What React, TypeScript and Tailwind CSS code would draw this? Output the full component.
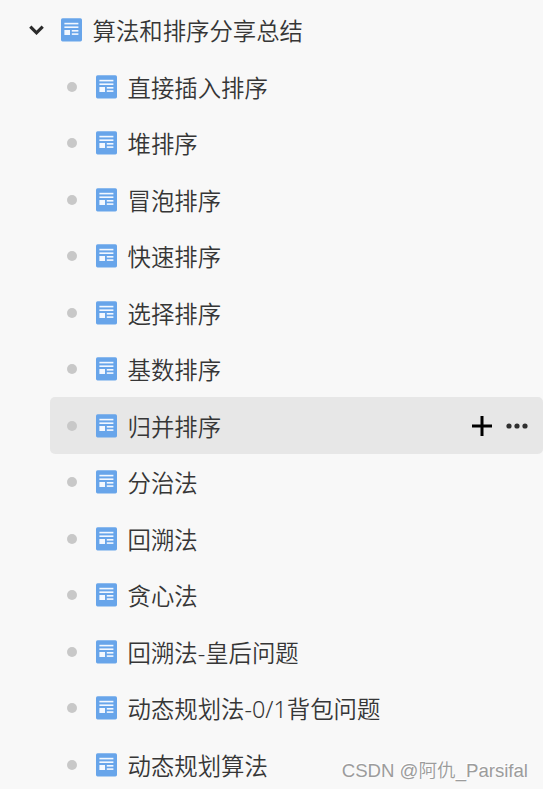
import React, { useState } from "react";

type DocNode = {
  id: number;
  title: string;
};

const children: DocNode[] = [
  { id: 1, title: "直接插入排序" },
  { id: 2, title: "堆排序" },
  { id: 3, title: "冒泡排序" },
  { id: 4, title: "快速排序" },
  { id: 5, title: "选择排序" },
  { id: 6, title: "基数排序" },
  { id: 7, title: "归并排序" },
  { id: 8, title: "分治法" },
  { id: 9, title: "回溯法" },
  { id: 10, title: "贪心法" },
  { id: 11, title: "回溯法-皇后问题" },
  { id: 12, title: "动态规划法-0/1背包问题" },
  { id: 13, title: "动态规划算法" },
];

function DocIcon() {
  return (
    <svg width="21" height="24" viewBox="0 0 21 24" className="shrink-0" aria-hidden="true">
      <rect x="0" y="0.2" width="21" height="23.2" rx="1.6" fill="#68a5ea" />
      <g fill="#f3f8ff">
        <rect x="3.4" y="4.8" width="14" height="1.6" />
        <rect x="3.4" y="8.4" width="14" height="1.6" />
        <rect x="3.4" y="12" width="5.6" height="5" />
        <rect x="10.8" y="12" width="6.6" height="1.6" />
        <rect x="10.8" y="15.3" width="6.6" height="1.6" />
      </g>
    </svg>
  );
}

export default function App() {
  const [open, setOpen] = useState(true);
  const [activeId, setActiveId] = useState(7);

  return (
    <div className="relative h-[789px] w-[543px] overflow-hidden bg-[#f8f8f8] pt-[1.9px] font-['Noto_Sans','Noto_Sans_CJK_SC',sans-serif] text-[23.4px] font-[350] leading-none text-[#363636]">
      <div className="flex h-[56.5px] items-center pl-[29px]">
        <button type="button" onClick={() => setOpen(!open)} aria-label="toggle">
          <svg width="15" height="10" viewBox="0 0 15 10" className={open ? "" : "-rotate-90"}>
            <path d="M1.3 1.7 7.5 7.8 13.7 1.7" fill="none" stroke="#2b2b2b" strokeWidth="3.2" />
          </svg>
        </button>
        <div className="ml-[17px] flex items-center">
          <DocIcon />
          <span className="ml-[10.5px] whitespace-nowrap pt-[3px]">算法和排序分享总结</span>
        </div>
      </div>

      {open ? (
        <ul className="pl-[50px]">
          {children.map((node) => (
            <li
              key={node.id}
              onClick={() => setActiveId(node.id)}
              className={`flex h-[56.5px] items-center rounded-[5px] pl-[17px] pr-[15px] ${
                node.id === activeId ? "bg-[#e7e7e7]" : ""
              }`}
            >
              <span className="size-[10px] shrink-0 rounded-full bg-[#c8c8c8]" />
              <span className="ml-[19px] flex">
                <DocIcon />
              </span>
              <span className="ml-[10.5px] whitespace-nowrap pt-[3.7px]">{node.title}</span>
              {node.id === activeId ? (
                <div className="ml-auto flex items-center gap-[14px]">
                  <svg width="20" height="20" viewBox="0 0 20 20">
                    <path d="M10 0v20M0 10h20" fill="none" stroke="#000" strokeWidth="3" />
                  </svg>
                  <svg width="22" height="6" viewBox="0 0 22 6" className="mt-px" fill="#303030">
                    <circle cx="3" cy="3" r="2.6" />
                    <circle cx="11" cy="3" r="2.6" />
                    <circle cx="19" cy="3" r="2.6" />
                  </svg>
                </div>
              ) : null}
            </li>
          ))}
        </ul>
      ) : null}

      <span className="absolute bottom-[8px] right-[15px] whitespace-nowrap font-['Liberation_Sans','Noto_Sans_CJK_SC',sans-serif] text-[18.6px] text-[#9c9c9c] [text-shadow:-1px_-1px_0_#fff]">
        CSDN @阿仇_Parsifal
      </span>
    </div>
  );
}
